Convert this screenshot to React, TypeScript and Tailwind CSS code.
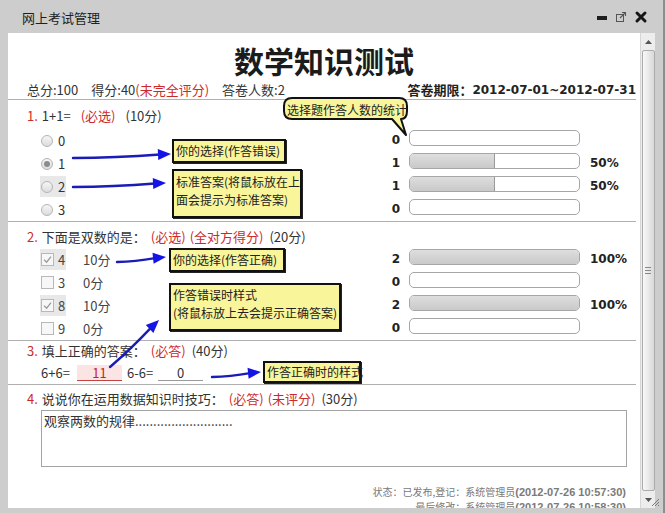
import React from "react";

const cjk = "font-['Noto_Sans_CJK_SC',sans-serif]";
const dv = "font-['DejaVu_Sans',sans-serif]";
const lib = "font-['Liberation_Sans','Noto_Sans_CJK_SC',sans-serif]";

function Radio({ checked }: { checked?: boolean }) {
  return (
    <span className="inline-flex w-[12px] h-[12px] rounded-full border border-[#b4b4b4] bg-gradient-to-b from-[#f6f6f6] to-[#dcdcdc] items-center justify-center shrink-0">
      {checked && <span className="w-[6px] h-[6px] rounded-full bg-[#8c8c8c]" />}
    </span>
  );
}

function Check({ checked }: { checked?: boolean }) {
  return (
    <span className="inline-flex w-[13px] h-[13px] border border-[#b8b8b8] bg-[#f7f7f7] items-center justify-center shrink-0">
      {checked && (
        <svg width="9" height="9" viewBox="0 0 9 9">
          <path d="M1 4.6 L3.6 7.2 L8 1.6" stroke="#9a9a9a" strokeWidth="1.3" fill="none" />
        </svg>
      )}
    </span>
  );
}

function Bar({ count, pct }: { count: number; pct: number }) {
  return (
    <>
      <div className={`w-[20px] text-right leading-[23px] text-[12px] font-bold text-[#222] ${dv}`}>{count}</div>
      <div className="ml-[9px] mt-[1px] w-[171px] h-[16px] rounded-[5px] border border-[#a6a6a6] bg-white overflow-hidden flex">
        {pct > 0 && (
          <div
            className={`h-full bg-gradient-to-b from-[#dedede] to-[#c9c9c9] ${pct < 100 ? "border-r border-[#9a9a9a]" : ""}`}
            style={{ width: `${pct}%` }}
          />
        )}
      </div>
      {pct > 0 && <div className={`ml-[10px] leading-[23px] text-[12px] font-bold text-[#222] ${dv}`}>{pct}%</div>}
    </>
  );
}

function RadioRow({ label, checked, hl, count, pct }: { label: string; checked?: boolean; hl?: boolean; count: number; pct: number }) {
  return (
    <div className="flex h-[23px] items-start ml-[13px]">
      <div className="w-[340px] h-[23px] flex items-center">
        <span className={`flex items-center h-[21px] pl-[1px] pr-[1px] ${hl ? "bg-[#e8e8e8]" : ""}`}>
          <Radio checked={checked} />
          <span className="ml-[5px] w-[7px] text-[13px] text-[#333]">{label}</span>
        </span>
      </div>
      <Bar count={count} pct={pct} />
    </div>
  );
}

function CheckRow({ label, score, checked, count, pct }: { label: string; score: string; checked?: boolean; count: number; pct: number }) {
  return (
    <div className="flex h-[23px] items-start ml-[13px]">
      <div className="w-[340px] h-[23px] flex items-center text-[13px] text-[#444]">
        <span className={`flex items-center h-[21px] pl-[1px] pr-[1px] ${checked ? "bg-[#e8e8e8]" : ""}`}>
          <Check checked={checked} />
          <span className="ml-[4px] w-[7px]">{label}</span>
        </span>
        <span className="ml-[17px]">{score}</span>
      </div>
      <Bar count={count} pct={pct} />
    </div>
  );
}

function Arrow({ x1, y1, x2, y2 }: { x1: number; y1: number; x2: number; y2: number }) {
  const dx = x2 - x1;
  const dy = y2 - y1;
  const L = Math.hypot(dx, dy);
  const ux = dx / L;
  const uy = dy / L;
  const hl = 13;
  const hw = 5.5;
  const bx = x2 - ux * hl;
  const by = y2 - uy * hl;
  const p1 = `${bx - uy * hw},${by + ux * hw}`;
  const p2 = `${bx + uy * hw},${by - ux * hw}`;
  const mx = (x1 + bx) / 2 - uy * 1.5;
  const my = (y1 + by) / 2 + ux * 1.5;
  return (
    <g>
      <path d={`M${x1},${y1} Q${mx},${my} ${bx + ux * 2},${by + uy * 2}`} stroke="#1b1bb8" strokeWidth={2.4} fill="none" strokeLinecap="round" />
      <polygon points={`${x2},${y2} ${p1} ${p2}`} fill="#1414e6" />
    </g>
  );
}

function Note({ className, children }: { className: string; children: React.ReactNode }) {
  return (
    <div
      className={`absolute bg-[#f8f59b] border-[2px] border-[#111] text-[12px] leading-[18px] text-[#222] pl-[2px] whitespace-nowrap shadow-[1px_1px_0_#222] ${cjk} ${className}`}
    >
      {children}
    </div>
  );
}

function Scrollbar() {
  return (
    <div className="w-[15px] h-full bg-[#ededed] flex flex-col items-center border-l border-[#d6d6d6]">
      <div className="h-[17px] w-full flex items-center justify-center">
        <svg width="7" height="4" viewBox="0 0 7 4">
          <polygon points="3.5,0 7,4 0,4" fill="#555" />
        </svg>
      </div>
      <div className="w-[13px] flex-1 rounded-[2px] border border-[#ababab] bg-gradient-to-r from-[#f8f8f8] to-[#d9d9d9] flex items-center justify-center">
        <svg width="6" height="7" viewBox="0 0 6 7">
          <path d="M0 0.5 H6 M0 3.5 H6 M0 6.5 H6" stroke="#888" strokeWidth="1" />
        </svg>
      </div>
      <div className="h-[17px] w-full flex items-center justify-center">
        <svg width="7" height="4" viewBox="0 0 7 4">
          <polygon points="0,0 7,0 3.5,4" fill="#555" />
        </svg>
      </div>
    </div>
  );
}

export default function App() {
  const red = "text-[#cc2a2a]";
  return (
    <div className={`relative w-[665px] h-[513px] bg-[#cdcdcd] flex flex-col overflow-hidden border-r-[2px] border-[#8e8e8e] ${cjk}`}>
      {/* title bar */}
      <div className="h-[33px] shrink-0 flex items-center pt-[2px] pl-[22px] text-[13px] text-[#1e1e1e]">网上考试管理</div>

      <div className="flex flex-1 min-h-0 pl-[8px] pr-[8px] pb-[5px]">
        <div className="flex-1 h-full bg-white overflow-hidden">
          <div className="pt-[7px] text-center leading-[40px] text-[30px] font-bold text-[#1b1b1b]">数学知识测试</div>

          <div className="mr-[4px] flex h-[20px] items-center border-b border-[#b0b0b0] pl-[19px] text-[13px] text-[#333]">
            <span>总分:100</span>
            <span className="ml-[13px]">得分:40</span>
            <span className={red}>(未完全评分)</span>
            <span className="ml-[13px]">答卷人数:2</span>
            <span className="ml-auto font-bold text-[#222]">答卷期限：</span>
            <span className={`font-bold text-[12px] text-[#222] ${dv}`}>2012-07-01~2012-07-31</span>
          </div>

          {/* Q1 */}
          <div className="mr-[4px] border-b border-[#b0b0b0] pl-[19px] pt-[6px]">
            <div className="leading-[20px] text-[13px] text-[#333] flex">
              <span className={red}>1.</span>
              <span className="ml-[4px]">1+1=</span>
              <span className={`ml-[10px] ${red}`}>(必选)</span>
              <span className="ml-[10px]">(10分)</span>
            </div>
            <div className="mt-[3px]">
              <RadioRow label="0" count={0} pct={0} />
              <RadioRow label="1" checked count={1} pct={50} />
              <RadioRow label="2" hl count={1} pct={50} />
              <RadioRow label="3" count={0} pct={0} />
            </div>
          </div>

          {/* Q2 */}
          <div className="mr-[4px] border-b border-[#b0b0b0] pl-[19px] pt-[5px]">
            <div className="leading-[20px] text-[13px] text-[#333] flex">
              <span className={red}>2.</span>
              <span className="ml-[4px]">下面是双数的是：</span>
              <span className={`ml-[5px] ${red}`}>(必选)</span>
              <span className={`ml-[4px] ${red}`}>(全对方得分)</span>
              <span className="ml-[6px]">(20分)</span>
            </div>
            <div className="mt-[1px]">
              <CheckRow label="4" score="10分" checked count={2} pct={100} />
              <CheckRow label="3" score="0分" count={0} pct={0} />
              <CheckRow label="8" score="10分" checked count={2} pct={100} />
              <CheckRow label="9" score="0分" count={0} pct={0} />
            </div>
          </div>

          {/* Q3 */}
          <div className="mr-[4px] border-b border-[#b0b0b0] pl-[19px]">
            <div className="leading-[20px] text-[13px] text-[#333] flex">
              <span className={red}>3.</span>
              <span className="ml-[4px]">填上正确的答案：</span>
              <span className={`ml-[5px] ${red}`}>(必答)</span>
              <span className="ml-[6px]">(40分)</span>
            </div>
            <div className="mt-[1px] flex items-center h-[22px] ml-[14px] text-[13px] text-[#333]">
              <span className="w-[36px]">6+6=</span>
              <span className="w-[45px] h-[16px] bg-[#fbe4e4] border-b border-[#c84040] text-center text-[#cc2222] leading-[16px]">11</span>
              <span className="ml-[5px] w-[31px]">6-6=</span>
              <span className="w-[45px] h-[16px] border-b border-[#9a9a9a] text-center leading-[16px]">0</span>
            </div>
          </div>

          {/* Q4 */}
          <div className="mr-[4px] pl-[19px] pt-[4px]">
            <div className="leading-[20px] text-[13px] text-[#333] flex">
              <span className={red}>4.</span>
              <span className="ml-[4px]">说说你在运用数据知识时技巧：</span>
              <span className={`ml-[5px] ${red}`}>(必答)</span>
              <span className={`ml-[4px] ${red}`}>(未评分)</span>
              <span className="ml-[6px]">(30分)</span>
            </div>
            <div className="mt-[1px] ml-[14px] w-[586px] h-[57px] border border-[#a4a4a4] pl-[2px] pt-[2px] text-[13px] leading-[16px] text-[#333]">
              观察两数的规律...........................
            </div>
            <div className="mt-[17px] pr-[10px] text-right text-[11px] leading-[14px] text-[#7a7a7a]">
              <div>
                <span className="text-[10px]">状态：已发布,登记：系统管理员</span>
                <span className={`font-bold ${lib}`}>(2012-07-26 10:57:30)</span>
              </div>
              <div>
                <span className="text-[10px]">最后修改：系统管理员</span>
                <span className={`font-bold ${lib}`}>(2012-07-26 10:58:30)</span>
              </div>
            </div>
          </div>
        </div>
        <Scrollbar />
      </div>

      {/* title bar icons */}
      <svg className="absolute left-0 top-0 pointer-events-none" width="665" height="34">
        <rect x="597" y="16" width="10" height="4" fill="#1e1e1e" />
        <rect x="616.5" y="14.5" width="7" height="7" fill="none" stroke="#555" strokeWidth="1" />
        <path d="M620 18 L625.5 12.5 M622 12.5 H625.5 V16" stroke="#555" strokeWidth="1.1" fill="none" />
        <path d="M637 13 L645 21 M645 13 L637 21" stroke="#151515" strokeWidth="3" strokeLinecap="round" />
      </svg>

      {/* resize grip */}
      <svg className="absolute left-[650px] top-[497px] pointer-events-none" width="10" height="10">
        <path d="M9 2 L2 9 M9 5 L5 9 M9 8 L8 9" stroke="#777" strokeWidth="1" />
      </svg>

      {/* arrows */}
      <svg className="absolute left-0 top-0 pointer-events-none" width="665" height="513">
        <Arrow x1={73} y1={158} x2={171} y2={154} />
        <Arrow x1={73} y1={187} x2={166} y2={183} />
        <Arrow x1={117} y1={262} x2={166} y2={257} />
        <Arrow x1={110} y1={367} x2={159} y2={320} />
        <Arrow x1={212} y1={377} x2={261} y2={372} />
      </svg>

      {/* speech bubble */}
      <svg className="absolute left-[280px] top-[95px] pointer-events-none" width="135" height="45">
        <path
          d="M12,3 H119 Q127,3 127,11 V16 Q127,24 121,24 L126,40 L112,24 H12 Q4,24 4,16 V11 Q4,3 12,3 Z"
          fill="#f8f59b"
          stroke="#111"
          strokeWidth="2"
          strokeLinejoin="round"
        />
      </svg>
      <div className="absolute left-[287px] top-[101px] text-[12px] leading-[18px] text-[#222] whitespace-nowrap">选择题作答人数的统计</div>

      <Note className="left-[172px] top-[139px] w-[114px] h-[24px] pt-[1px]">你的选择(作答错误)</Note>
      <Note className="left-[172px] top-[169px] w-[130px] h-[49px] pt-[2px]">
        标准答案(将鼠标放在上
        <br />
        面会提示为标准答案)
      </Note>
      <Note className="left-[169px] top-[248px] w-[116px] h-[24px] pt-[1px]">你的选择(作答正确)</Note>
      <Note className="left-[169px] top-[283px] w-[172px] h-[48px] pt-[1px]">
        作答错误时样式
        <br />
        (将鼠标放上去会提示正确答案)
      </Note>
      <Note className="left-[263px] top-[361px] w-[98px] h-[22px]">作答正确时的样式</Note>
    </div>
  );
}
